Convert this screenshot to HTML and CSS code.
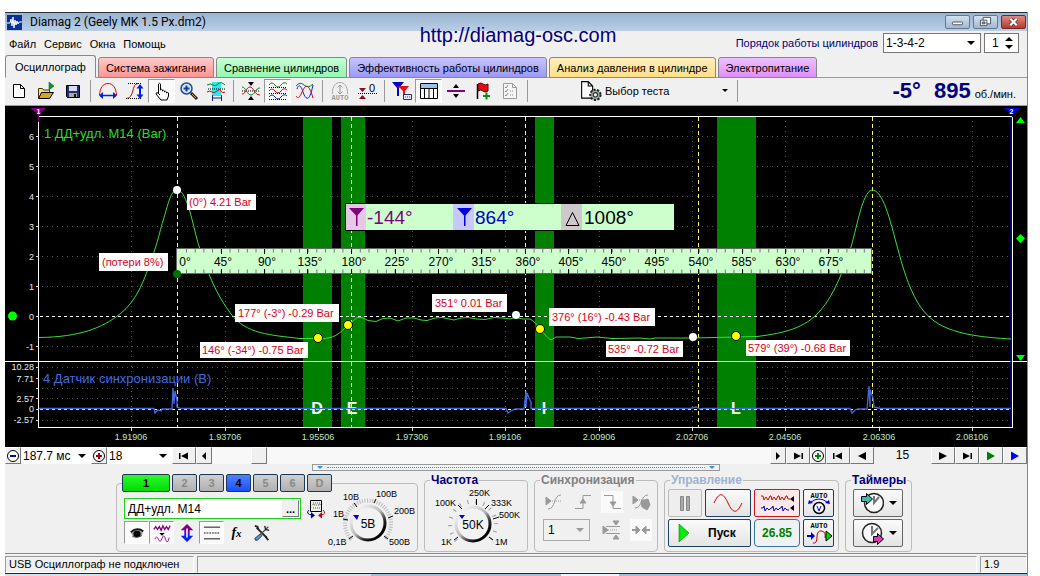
FILE: index.html
```html
<!DOCTYPE html>
<html lang="ru">
<head>
<meta charset="utf-8">
<title>Diamag 2 (Geely MK 1.5 Px.dm2)</title>
<link rel="stylesheet" href="styles.css">
</head>
<body>
<main class="window">
  <header class="titlebar">
    <svg class="app-icon" viewBox="0 0 15 15"><rect width="15" height="15" fill="#0a2f96"/><path d="M0 8h3l1-4 1 7 1-9 1 11 1-8 1 5 1-4 1 3 1-2h3" fill="none" stroke="#fff"/></svg>
    <h1 class="title">Diamag 2 (Geely MK 1.5 Px.dm2)</h1>
    <div class="win-buttons">
      <button class="win-btn" aria-label="Свернуть"><svg viewBox="0 0 24 13"><rect x="6.5" y="6.500" width="11" height="3" rx="1" fill="#fff" stroke="#444b58"/></svg></button>
      <button class="win-btn" aria-label="Восстановить"><svg viewBox="0 0 24 13"><path d="M9.500 1.500h8v7h-8z" fill="#fff" stroke="#444b58"/><path d="M6.500 4.500h7v6h-7z" fill="#fff" stroke="#444b58"/><path d="M8.500 6.500h3v2h-3z" fill="#8fa9c6" stroke="#444b58"/></svg></button>
      <button class="win-btn close" aria-label="Закрыть"><svg viewBox="0 0 24 13"><path d="M8.500 3l7 7M15.500 3l-7 7" stroke="#5c3030" stroke-width="4"/><path d="M8.500 3l7 7M15.500 3l-7 7" stroke="#fff" stroke-width="2.400"/></svg></button>
    </div>
  </header>
  <a class="site-link" href="#site">http://diamag-osc.com</a>

  <div class="menu-row">
    <nav class="menu">
      <button>Файл</button><button>Сервис</button><button>Окна</button><button>Помощь</button>
    </nav>
    <label class="order-label" for="order">Порядок работы цилиндров</label>
    <span class="select order"><select id="order"><option>1-3-4-2</option></select></span>
    <span class="spin"><input type="number" value="1" aria-label="Номер цилиндра"><svg viewBox="0 0 8 14"><path d="M4 1L8 5H0zM0 9h8l-4 4z"/></svg></span>
  </div>

  <nav class="tabs">
    <button class="tab active">Осциллограф</button>
    <button class="tab red">Система зажигания</button>
    <button class="tab green">Сравнение цилиндров</button>
    <button class="tab blue">Эффективность работы цилиндров</button>
    <button class="tab yellow">Анализ давления в цилиндре</button>
    <button class="tab violet">Электропитание</button>
  </nav>

  <div class="toolbar">
    <button class="tool" aria-label="Новый"><svg viewBox="0 0 20 20"><path d="M4.500 3.500h7l4 4v9h-11zM11.500 3.500v4h4" fill="#fff" stroke="#000"/></svg></button>
    <button class="tool" aria-label="Открыть"><svg viewBox="0 0 20 20"><path d="M2.500 17.500v-10h4l1 1.500h6v3" fill="#f5dd8c" stroke="#4a3a00"/><path d="M2.500 17.500l3-6h12l-4 6z" fill="#d9a520" stroke="#000"/><path d="M13 1l5 4-5 4z" fill="#00a020" stroke="#004d10" stroke-width=".5"/></svg></button>
    <button class="tool" aria-label="Сохранить"><svg viewBox="0 0 20 20"><path d="M3.500 4.500h13v12h-12l-1-1z" fill="#26306e" stroke="#000"/><path d="M6 5h8v5H6z" fill="#d8dcf0"/><path d="M6 12h8v4H6z" fill="#aaa"/><path d="M11 13h2v3h-2z" fill="#111"/></svg></button>
    <span class="sep"></span>
    <button class="tool" aria-label="Развертка"><svg viewBox="0 0 20 20"><path d="M1.500 14C2 7 5 2.500 10 2.500S18 7 18.500 14" fill="none" stroke="#e00000"/><path d="M3 14.500h14" stroke="#0022dd" stroke-width="1.500"/><path d="M1 14.500l4-3.500v7zM19 14.500l-4-3.500v7z" fill="#0022dd"/></svg></button>
    <button class="tool" aria-label="Амплитуда"><svg viewBox="0 0 20 20"><path d="M1 17.500c9 0 5-15 12-15" fill="none" stroke="#e00000"/><path d="M3 2.500h14M1 17.500h15" stroke="#000" stroke-dasharray="1 1"/><path d="M15 6v9" stroke="#0022dd" stroke-width="2"/><path d="M11.500 7.500L15 3l3.500 4.500zM11.500 13.500L15 18l3.500-4.500z" fill="#0022dd"/></svg></button>
    <button class="tool pressed" aria-label="Рука"><svg viewBox="0 0 20 20"><path d="M6.500 13V3q1-1.500 2 0v6q1-1.500 2 0v1q1-1.500 2 0v1q1-1.500 2 0v1q1-1 2 0v3l-1.500 4h-6l-5-6q0-2 2-1l2 2" fill="#fff" stroke="#000"/></svg></button>
    <button class="tool" aria-label="Увеличить"><svg viewBox="0 0 20 20"><path d="M12 12l6 6" stroke="#222" stroke-width="3"/><path d="M13 13l4 4" stroke="#d9a44b" stroke-width="1"/><circle cx="7.500" cy="7.500" r="5.500" fill="#d6ecff" stroke="#234a86" stroke-width="1.500"/><path d="M4.500 7.500h6M7.500 4.500v6" stroke="#1838a8" stroke-width="2"/></svg></button>
    <button class="tool" aria-label="Выделить участок"><svg viewBox="0 0 20 20"><path d="M6 1h9v14H6z" fill="#2ee6ee"/><path d="M1 4q4-2 6 0t5-1 7 1" fill="none" stroke="#087f2f"/><path d="M2 8h17" stroke="#000" stroke-dasharray="1 1"/><path d="M1 11q3-2 5 0t5-1 4 0 4 1" fill="none" stroke="#e00000"/><path d="M7 17h8M6.500 14v6M15.500 14v6" stroke="#102090"/></svg></button>
    <span class="sep"></span>
    <button class="tool" aria-label="Совместить"><svg viewBox="0 0 20 20"><path d="M1 10h18" stroke="#000" stroke-dasharray="1 1"/><path d="M1 13c4 0 4-7 8-7s4 8 10 8" fill="none" stroke="#e00000"/><path d="M1 6c4 0 5 8 9 8s4-7 9-7" fill="none" stroke="#087f2f"/><path d="M7 1h6l-3 4zM7 19h6l-3-4z"/></svg></button>
    <button class="tool pressed" aria-label="Разделить"><svg viewBox="0 0 20 20"><path d="M1 4q3-4 6 0t6 0 6-1" fill="none" stroke="#087f2f"/><path d="M1 6.500h18M1 12.500h18M1 18.500h18" stroke="#000" stroke-dasharray="1 1"/><path d="M1 10q3-4 6 0t6 0 6-1" fill="none" stroke="#e00000"/><path d="M1 16q3-4 6 0t6 0 6-1" fill="none" stroke="#0022dd"/></svg></button>
    <button class="tool" aria-label="Наложить"><svg viewBox="0 0 20 20"><path d="M1 5q4-5 8-1t9-1" fill="none" stroke="#087f2f"/><path d="M2 8C4 2 6 5 8 11s6 13 10-7" fill="none" stroke="#0022dd"/><path d="M1 15C4 19 5 15 8 9s6-6 10 8" fill="none" stroke="#e00000"/></svg></button>
    <span class="sep"></span>
    <button class="tool" aria-label="Авто"><svg viewBox="0 0 20 20"><path d="M2.500 13C2 5 6 1.500 10 1.500S18 5 17.500 13" fill="none" stroke="#a8a8a8"/><path d="M10 4v8M7.500 6.500L10 4l2.500 2.500M7.500 10.500L10 13l2.500-2.500" fill="none" stroke="#999"/><text x="10" y="19" class="ic-auto gray">AUTO</text></svg></button>
    <button class="tool" aria-label="Ноль"><svg viewBox="0 0 20 20"><path d="M1 12.500h19" stroke="#000" stroke-dasharray="1 1"/><path d="M2 7h7l-3.500 4zM2 18h7l-3.500-4z" fill="#8b0a1a"/><text x="15" y="11" class="ic-zero">0</text></svg></button>
    <span class="sep"></span>
    <button class="tool" aria-label="Маркеры"><svg viewBox="0 0 20 20"><path d="M0 1h12L7 7v8H5V7z" fill="#0000d8"/><path d="M6 5h11l-4 5v7h-2v-7z" fill="#e01010"/><path d="M11.500 13.500h8v5h-8z" fill="#eef" stroke="#24306c"/><path d="M13 16h5" stroke="#24306c" stroke-dasharray="1 1"/></svg></button>
    <button class="tool pressed" aria-label="Таблица"><svg viewBox="0 0 20 20"><path d="M1.500 2.500h17v15h-17z" fill="#fff" stroke="#000"/><path d="M2 3h16v4H2z" fill="#9dc0ea"/><path d="M1 7.500h18M5.500 7v10M10 7v10M14.500 7v10" stroke="#000"/></svg></button>
    <button class="tool" aria-label="Линия"><svg viewBox="0 0 20 20"><path d="M1 10h18" stroke="#800080" stroke-width="2"/><path d="M10 3l3 4H7zM10 17l3-4H7z"/></svg></button>
    <button class="tool" aria-label="Флажок"><svg viewBox="0 0 20 20"><path d="M4.500 3v15" stroke="#000" stroke-width="1.500"/><path d="M5 3q3-2 5 0t5 0v7q-3 2-5 0t-5 0z" fill="#e40c14" stroke="#600"/><path d="M10 15h7M13.500 11.500v7" stroke="#0a8a1c" stroke-width="2"/></svg></button>
    <button class="tool" aria-label="Отчет"><svg viewBox="0 0 20 20"><path d="M3.500 2.500h9l4 4v11h-13zM12.500 2.500v4h4" fill="#f6f6f6" stroke="#999"/><path d="M5 6l1 1 2-3M5 10l1 1 2-3M5 14l1 1 2-3" fill="none" stroke="#888"/><path d="M10 10h4M10 14h4" stroke="#888" stroke-dasharray="1 1"/></svg></button>
    <span class="sep"></span>
    <button class="test-pick">
      <svg class="test-ic" viewBox="0 0 20 20"><path d="M1.500 1.500h6l4 4v11h-10zM7.500 1.500v4h4" fill="#fff" stroke="#000"/><circle cx="14" cy="13.500" r="4.700" fill="#9aa89c" stroke="#222" stroke-width="1.800" stroke-dasharray="2 1.300"/><circle cx="14" cy="13.500" r="2" fill="#eee" stroke="#333"/></svg>
      <span>Выбор теста</span><i class="caret"></i>
    </button>
    <span class="sep"></span>
    <output class="rpm"><b>-5°</b><b>895</b><small>об./мин.</small></output>
  </div>

  <svg class="chart" viewBox="5 106 1022 341" role="img" aria-label="Осциллограмма">
    <rect x="5" y="106" width="1022" height="341" fill="#000"/>
    <g class="grid">
      <path d="M131.500 121V427M225.500 121V427M318.500 121V427M412.500 121V427M505.500 121V427M599.500 121V427M692.500 121V427M785.500 121V427M879.500 121V427M972.500 121V427"/>
      <path d="M42 136.500H1011M42 166.500H1011M42 196.500H1011M42 226.500H1011M42 256.500H1011M42 286.500H1011M42 346.500H1011M42 367.500H1011M42 378.500H1011M42 388.500H1011M42 398.500H1011M42 420.500H1011"/>
    </g>
    <path d="M303 117h29v310h-29zM341 117h24v310h-24zM535 117h19v310h-19zM717 117h39v310h-39z" fill="#008000"/>
    <path d="M40 316.500H1011M40 409.500H1011" stroke="#fff" stroke-dasharray="3 3"/>
    <path d="M177.500 117V427M351.500 117V427M525.500 117V427M698.500 117V427M872.500 117V427" stroke="#ffff50" stroke-dasharray="4 3"/>
    <path d="M38 116.500H1012M5 361.500H1027M38 427.500H1013" stroke="#fff"/>
    <path d="M38.500 117V428M1012.500 117V428" stroke="#fff"/>
    <path d="M1011.200 117V427" stroke="#0000b0" stroke-width="1.500"/>
    <path d="M36 136.500h3M36 166.500h3M36 196.500h3M36 226.500h3M36 256.500h3M36 286.500h3M36 316.500h3M36 346.500h3M36 367.500h3M36 378.500h3M36 388.500h3M36 398.500h3M36 409.500h3M36 420.500h3M131.500 428v3M225.500 428v3M318.500 428v3M412.500 428v3M505.500 428v3M599.500 428v3M692.500 428v3M785.500 428v3M879.500 428v3M972.500 428v3" stroke="#ddd"/>
    <path class="trace" d="M39 337.500C80 337 102 328 120 314S145 278 154 252C159 237 161 227 163 221C168 204 171 190 177 190S186 200 190 212C194 226 196 237 199 246C208 274 216 294 231 314S270 335 300 338.500L317 338.500C334 340 340 333 348 325L353 321L357 317.500L362 317.500L368 320.500L376 321.500L383 318.500L390 318L398 321L406 318L414 318L421 320L427 320.500L435 318L442 317.500L454 320L461 318L468 317.500L477 319L485 319.500L494 317.500L503 318L510 319L516 317L522 319L530 319C538 323 542 334 551 340L556 337L570 337L578 338.500L585 338L597 337L612 338.500L640 338L650 339L655 338L693 338L736 337L757 336.500C785 333 805 328 820 311S844 268 850 250C856 233 862 191 872 190C883 190 890 220 897 246C903 268 908 286 918 303C932 326 953 336 1011 339"/>
    <path class="sync" d="M39 408.500H154L155 413L158 410L161 411L162 409H172L173 388L174 404L175 391L177 400V407L181 408.500H506L508 413L511 411L515 409H524L526 391V407L527 393L529 398L531 402V408.500H690L696 407L700 409L702 408.500H850L852 413L855 410L858 409H867L869 386L870 407V390L873 398L874 407L880 408.500H1011"/>
    <g class="stage"><text x="317" y="414">D</text><text x="352" y="414">E</text><text x="544" y="414">I</text><text x="736" y="414">L</text></g>
    <path d="M311 408.500h12M346 408.500h12M538 408.500h12M731 408.500h12" stroke="#4169e1"/>

    <text x="44" y="138" class="ch-name lime">1 ДД+удл. М14 (Bar)</text>
    <text x="43" y="383" class="ch-name royal">4 Датчик синхронизации (В)</text>
    <g class="axis y">
      <text x="34" y="140">6</text><text x="34" y="170">5</text><text x="34" y="200">4</text><text x="34" y="230">3</text><text x="34" y="260">2</text><text x="34" y="290">1</text><text x="34" y="320">0</text><text x="34" y="350">-1</text>
      <text x="34" y="370">10.28</text><text x="34" y="382">7.71</text><text x="34" y="402">2.57</text><text x="34" y="412">0</text><text x="34" y="423">-2.57</text>
    </g>
    <g class="axis x">
      <text x="131" y="440">1.91906</text><text x="225" y="440">1.93706</text><text x="318" y="440">1.95506</text><text x="412" y="440">1.97306</text><text x="505" y="440">1.99106</text><text x="599" y="440">2.00906</text><text x="692" y="440">2.02706</text><text x="785" y="440">2.04506</text><text x="879" y="440">2.06306</text><text x="972" y="440">2.08106</text>
    </g>
    <path d="M30 108h16l-7 7zM38 113h1v9h-1z" fill="#800080"/><text x="38.500" y="114" class="flag">1</text>
    <path d="M1004 108h16l-8 7z" fill="#0000f0"/><text x="1011.500" y="114" class="flag">2</text>
    <path d="M1020.500 117l4.500 6h-9zM1020.500 234l4.500 4.500-4.500 4.500-4.500-4.500zM1016 355h9l-4.500 6z" fill="#00ff00"/>
    <circle cx="12.500" cy="316" r="4.500" fill="#00ff00"/>

    <rect x="176.500" y="248.500" width="695" height="25" fill="#ccffcc" stroke="#666"/>
    <path d="M186 250.500H871M186 271.500H871" stroke="#777" stroke-width="4" stroke-dasharray="1 7.690"/>
    <path d="M221.500 249v5M264.500 249v5M307.500 249v5M351.500 249v5M395.500 249v5M438.500 249v5M481.500 249v5M525.500 249v5M568.500 249v5M611.500 249v5M655.500 249v5M698.500 249v5M742.500 249v5M785.500 249v5M828.500 249v5M221.500 269v5M264.500 269v5M307.500 269v5M351.500 269v5M395.500 269v5M438.500 269v5M481.500 269v5M525.500 269v5M568.500 269v5M611.500 269v5M655.500 269v5M698.500 269v5M742.500 269v5M785.500 269v5M828.500 269v5" stroke="#000"/>
    <g class="ruler">
      <text x="185" y="266">0°</text><text x="223" y="266">45°</text><text x="267" y="266">90°</text><text x="310" y="266">135°</text><text x="354" y="266">180°</text><text x="397" y="266">225°</text><text x="441" y="266">270°</text><text x="484" y="266">315°</text><text x="528" y="266">360°</text><text x="571" y="266">405°</text><text x="614" y="266">450°</text><text x="657" y="266">495°</text><text x="701" y="266">540°</text><text x="744" y="266">585°</text><text x="788" y="266">630°</text><text x="831" y="266">675°</text>
    </g>

    <rect x="345.500" y="203.500" width="329" height="27" fill="#ccffcc" stroke="#000"/>
    <path d="M346 204h20v26h-20z" fill="#e6c8e6"/><path d="M453 204h21v26h-21z" fill="#c8c8ff"/><path d="M561 204h21v26h-21z" fill="#ccc8cc"/>
    <path d="M349 208h15l-6.500 7.500V226h-1.500V215.500z" fill="#800080"/>
    <path d="M457 208h15l-6.500 7.500V226h-1.500V215.500z" fill="#0000e0"/>
    <path d="M572.500 212.500l6.500 13h-13z" fill="none" stroke="#000"/>
    <g class="readout"><text x="367" y="224" fill="#800080">-144°</text><text x="475" y="224" fill="#0000c8">864°</text><text x="584" y="224" fill="#000">1008°</text></g>

    <path d="M187 194h69v16h-69zM99 253h69v18h-69zM235 304h104v18h-104zM200 342h108v16h-108zM432 294h75v18h-75zM549 308h106v18h-106zM606 341h77v16h-77zM746 340h104v16h-104z" fill="#fff"/>
    <g class="note">
      <text x="189" y="206">(0°) 4.21 Bar</text><text x="102" y="266">(потери 8%)</text><text x="238" y="317">177° (-3°) -0.29 Bar</text><text x="202" y="354">146° (-34°) -0.75 Bar</text><text x="435" y="307">351° 0.01 Bar</text><text x="552" y="321">376° (16°) -0.43 Bar</text><text x="608" y="353">535° -0.72 Bar</text><text x="748" y="352">579° (39°) -0.68 Bar</text>
    </g>
    <g fill="#fff"><circle cx="177" cy="190" r="4"/><circle cx="516" cy="315" r="4"/><circle cx="693" cy="337" r="4"/></g>
    <g fill="#ffff00" stroke="#000"><circle cx="318" cy="338" r="4.500"/><circle cx="348" cy="325" r="4.500"/><circle cx="540" cy="329" r="4.500"/><circle cx="736" cy="336" r="4.500"/></g>
    <circle cx="177" cy="274" r="4" fill="#007000"/>
  </svg>

  <div class="nav-row">
    <button class="nb sm" aria-label="Уменьшить"><svg viewBox="0 0 14 14"><circle cx="7" cy="7" r="5.500" fill="#fff" stroke="#000"/><path d="M4 7h6" stroke="#000080" stroke-width="2"/></svg></button>
    <span class="select span"><select aria-label="Время"><option>187.7 мс</option></select></span>
    <button class="nb sm" aria-label="Увеличить"><svg viewBox="0 0 14 14"><circle cx="7" cy="7" r="5.500" fill="#fff" stroke="#000"/><path d="M4 7h6M7 4v6" stroke="#a00000" stroke-width="2"/></svg></button>
    <span class="select zoom"><select aria-label="Масштаб"><option>18</option></select></span>
    <button class="nb" aria-label="В начало"><svg viewBox="0 0 14 14"><path d="M2 4h1.500v6H2zM11 3.500v7L4 7z"/></svg></button>
    <button class="nb sm" aria-label="Влево"><svg viewBox="0 0 14 14"><path d="M9 3v8L5 7z"/></svg></button>
    <div class="track"><button class="thumb" aria-label="Прокрутка"></button></div>
    <button class="nb sm" aria-label="Вправо"><svg viewBox="0 0 14 14"><path d="M5 3v8l4-4z"/></svg></button>
    <button class="nb" aria-label="В конец"><svg viewBox="0 0 14 14"><path d="M10.500 4H12v6h-1.500zM3 3.500v7L10 7z"/></svg></button>
    <button class="nb sm" aria-label="Добавить кадр"><svg viewBox="0 0 14 14"><circle cx="7" cy="7" r="5.500" fill="#fff" stroke="#000"/><path d="M4 7h6M7 4v6" stroke="#008000" stroke-width="2"/></svg></button>
    <button class="nb" aria-label="Первый кадр"><svg viewBox="0 0 14 14"><path d="M2 4h1.500v6H2zM11 3.500v7L4 7z"/></svg></button>
    <button class="nb" aria-label="Предыдущий кадр"><svg viewBox="0 0 14 14"><path d="M11 3v8L3 7z"/></svg></button>
    <output class="frame">15</output>
    <button class="nb" aria-label="Следующий кадр"><svg viewBox="0 0 14 14"><path d="M3 3v8l8-4z"/></svg></button>
    <button class="nb" aria-label="Последний кадр"><svg viewBox="0 0 14 14"><path d="M10.500 4H12v6h-1.500zM3 3.500v7L10 7z"/></svg></button>
    <button class="nb" aria-label="Воспроизвести"><svg viewBox="0 0 14 14"><path d="M3 2.500v9l8-4.500z" fill="#008000"/></svg></button>
    <button class="nb" aria-label="Вперед"><svg viewBox="0 0 14 14"><path d="M3 2.500v9l8-4.500z" fill="#0000ff"/></svg></button>
  </div>

  <div class="splitter"><i></i><span></span><i></i></div>

  <div class="panel">
    <fieldset class="group channels">
      <legend>
        <button class="chan on1">1</button><button class="chan">2</button><button class="chan">3</button><button class="chan on4">4</button><button class="chan">5</button><button class="chan">6</button><button class="chan">D</button>
      </legend>
      <div class="chan-body">
        <div class="chan-left">
          <div class="sensor-row">
            <span class="sensor"><input type="text" value="ДД+удл. М14" aria-label="Датчик"><button>...</button></span>
            <svg class="meter" viewBox="0 0 20 20"><path d="M4.500 1.500h11v11h-11z" fill="#eee" stroke="#000"/><path d="M7 4h7v2H7zM7 9h7" stroke="#555" stroke-dasharray="1 1" fill="none"/><path d="M3 11q-4 4 3 5" fill="none" stroke="#000090"/><path d="M5 13l4 3.500-4 3z" fill="#000090"/><path d="M17 11q4 4-2 5" fill="none" stroke="#d00000"/><path d="M16 13l-4 3.500 4 3z" fill="#d00000"/></svg>
          </div>
          <div class="chan-icons">
            <button class="tool pressed" aria-label="Видимость"><svg viewBox="0 0 20 20"><path d="M3 9q7-5 14-1l-2 6q-6 3-10-1z" fill="#999"/><path d="M3 9q7-6 14-1" fill="none" stroke="#111" stroke-width="2"/><ellipse cx="10" cy="11" rx="4" ry="3.500"/><path d="M5 14q5 2 10-1" fill="none" stroke="#333"/></svg></button>
            <button class="tool pressed" aria-label="Сглаживание"><svg viewBox="0 0 20 20"><path d="M1 6l2-3 2 3 2-3 2 4 2-5 2 4 2-3 2 3 2-4" fill="none" stroke="#800080" stroke-width="1.500"/><path d="M7 10h6l-3 3z"/><path d="M2 17q2-5 4 0t4-1 4 1 4-2" fill="none" stroke="#a000a0"/></svg></button>
            <button class="tool" aria-label="Инверсия"><svg viewBox="0 0 20 20"><path d="M10 0l7 7h-4v3H7V7H3z" fill="#800080"/><path d="M10 20l7-7h-4v-3H7v3H3z" fill="#0020ff"/><path d="M10 5v10" stroke="#ddf" stroke-width="2"/></svg></button>
            <button class="tool pressed" aria-label="Линии"><svg viewBox="0 0 20 20"><path d="M1 3.500h18M1 16.500h18" stroke="#000"/><path d="M1 10h18" stroke="#000" stroke-dasharray="2 1"/></svg></button>
            <button class="tool fx" aria-label="Функция">f<small>x</small></button>
            <button class="tool" aria-label="Настройки"><svg viewBox="0 0 20 20"><path d="M4 4l11 11" stroke="#222" stroke-width="2"/><path d="M2 2l3 1 1 3M14 14l3 4" fill="none" stroke="#222" stroke-width="2"/><path d="M17 3L8 12" stroke="#555" stroke-width="1.500"/><path d="M13 2l1 4 4 1" stroke="#222" stroke-width="1.500" fill="none"/><path d="M8 11l-6 5q0 3 3 2l5-5z" fill="#6090d0" stroke="#234"/></svg></button>
          </div>
        </div>
        <svg class="dial volts" viewBox="328 487 91 62">
          <defs><linearGradient id="rim" x1="0.150" y1="0.100" x2="0.850" y2="0.850"><stop offset="0" stop-color="#f4f4f4"/><stop offset=".5" stop-color="#bbb"/><stop offset=".8" stop-color="#222"/><stop offset="1" stop-color="#000"/></linearGradient></defs>
          <path d="M353.500 540.500A23 23 0 1 1 386.500 540.500" fill="none" stroke="#bbb" stroke-width="4" stroke-dasharray="1 1.500"/>
          <path d="M351 540l4-3M345 520l5 1M356 504l3 4M378 500l-2 4M395 517l-5 2M390 540l-4-3" stroke="#000"/>
          <circle cx="370" cy="524" r="17" fill="#f2f2f2" stroke="url(#rim)" stroke-width="3"/><path d="M355 516h6l-2 5z" fill="#0000e0"/>
          <text x="370" y="529" class="dial-v">5В</text>
          <g class="dial-t"><text x="330" y="546">0,1В</text><text x="335" y="518">1В</text><text x="345" y="501">10В</text><text x="378" y="498">100В</text><text x="396" y="515">200В</text><text x="391" y="546">500В</text></g>
        </svg>
      </div>
    </fieldset>

    <fieldset class="group freq">
      <legend>Частота</legend>
      <svg class="dial" viewBox="426 487 101 62">
        <path d="M457.500 540.500A23 23 0 1 1 490.500 540.500" fill="none" stroke="#999" stroke-width="4" stroke-dasharray="1 7"/>
        <path d="M455 540l4-3M459 505l4 4M477.500 499v6M490 505l-4 4M500 517l-6 2M494 540l-4-3" stroke="#000"/>
        <circle cx="474" cy="524" r="17" fill="#f2f2f2" stroke="url(#rim)" stroke-width="3"/><path d="M460 515h6l-3 4z" fill="#0000e0"/>
        <text x="474" y="529" class="dial-v">50K</text>
        <g class="dial-t"><text x="442" y="545">1K</text><text x="436" y="506">100K</text><text x="470" y="496">250K</text><text x="492" y="506">333K</text><text x="500" y="518">500K</text><text x="496" y="545">1M</text></g>
      </svg>
    </fieldset>

    <fieldset class="group sync-group" disabled>
      <legend>Синхронизация</legend>
      <div class="sync-grid">
        <button class="gi" aria-label="Уровень"><svg viewBox="0 0 20 20"><path d="M2 5l5 4-5 4z"/><path d="M2 9h15" stroke-dasharray="1 1"/><path class="line" d="M4 17c8 0 5-14 13-14"/></svg></button>
        <button class="gi" aria-label="Фронт"><svg viewBox="0 0 20 20"><path class="line" d="M2 16.500h8v-13h8"/><path d="M10 7l-3 4h6z"/></svg></button>
        <button class="gi lit" aria-label="Спад"><svg viewBox="0 0 20 20"><path class="line" d="M2 3.500h9v13h8"/><path d="M11 14l-3-4h6z"/></svg></button>
        <button class="gi" aria-label="Ручная"><svg viewBox="0 0 20 20"><path d="M2 4l5 4-5 4z"/><path d="M2 8h16" stroke-dasharray="1 1"/><path class="line" d="M4 16c8 0 5-13 13-13"/><path d="M10 9l7-2 2 6-3 5-5-3z"/></svg></button>
        <span class="select sync-sel"><select aria-label="Канал синхронизации"><option>1</option></select></span>
        <button class="gi" aria-label="Окно"><svg viewBox="0 0 20 20"><path d="M1 6l5 4-5 4zM11 1h6l-3 4zM11 19h6l-3-4z"/><path d="M4 6.500h14M4 13.500h14"/><path d="M4 10h12" stroke-dasharray="1 1"/></svg></button>
        <button class="gi lit" aria-label="Центр"><svg viewBox="0 0 20 20"><path d="M1 10h5M14 10h5" stroke-width="2"/><path d="M5 6l4 4-4 4zM15 6l-4 4 4 4z"/></svg></button>
      </div>
    </fieldset>

    <fieldset class="group control">
      <legend>Управление</legend>
      <div class="ctl-grid">
        <button class="cb off" aria-label="Пауза"><svg viewBox="0 0 30 24"><path d="M10.500 5.500h3v14h-3zM16.500 5.500h3v14h-3z" fill="#aaa" stroke="#888"/></svg></button>
        <button class="cb" aria-label="Синус"><svg viewBox="0 0 30 24"><path d="M1 12C6 1 10 1 15 12S24 23 29 12" fill="none" stroke="#d00000"/></svg></button>
        <button class="cb alert" aria-label="Запись"><svg class="wide" viewBox="0 0 36 24"><path d="M2 5h2l1 4 2-3 2 3 2-4h1l1 4 2-3 2 3 2-4h1l1 4 2-3 2 3 2-4h1l1 3h2" fill="none" stroke="#d00000"/><path d="M2 17h2l1-2 1 5 2-3 2 2 2-2h1l1-2 1 5 2-3 2 2 2-2h1l1-2 1 5 2-3 2 2h2" fill="none" stroke="#0000d0"/><path d="M35 5v6l-4-3zM35 14v6l-4-3z" fill="#002"/></svg></button>
        <button class="cb" aria-label="Авто вольт"><svg viewBox="0 0 30 24"><text x="15" y="7" class="ic-auto">AUTO</text><path d="M7 11q8-6 16 0" fill="none" stroke="#0000d0"/><path d="M4 13l1-4 4 3zM26 13l-1-4-4 3z" fill="#0000d0"/><circle cx="15" cy="17" r="5.500" fill="#f8f8f8" stroke="#000" stroke-width="1.500"/><path d="M13 15l2 5 2-5" fill="none" stroke="#0000d0"/></svg></button>
        <button class="cb start"><svg viewBox="0 0 12 20"><path d="M1 1v18l10-9z" fill="#00ee00" stroke="#008000" stroke-width=".6"/></svg><span>Пуск</span></button>
        <output class="cb value">26.85</output>
        <button class="cb" aria-label="Авто запуск"><svg viewBox="0 0 30 24"><text x="15" y="7" class="ic-auto">AUTO</text><path d="M3 15h5" stroke="#0000d0" stroke-width="2"/><path d="M7 11l4 4-4 4z" fill="#0000d0"/><path d="M9 22q4 1 4-6t5-6q4 1 3 7" fill="none" stroke="#c00000"/><path d="M22 10v10l6-5z" fill="#00e000" stroke="#000"/></svg></button>
      </div>
    </fieldset>

    <fieldset class="group timers">
      <legend>Таймеры</legend>
      <div class="timer-col">
        <button class="cb timer" aria-label="Таймер запуска"><svg viewBox="0 0 24 24"><circle cx="14" cy="12" r="9.500" fill="#fafafa" stroke="#222" stroke-width="1.500"/><path d="M14 5v7l5-6" fill="none" stroke="#777" stroke-width="2"/><path d="M1.500 5.500h5v-3l6 5.500-6 5.500v-3h-5z" fill="#40b8b0" stroke="#000"/></svg><i class="caret"></i></button>
        <button class="cb timer" aria-label="Таймер остановки"><svg viewBox="0 0 24 24"><circle cx="12" cy="12" r="9.500" fill="#fafafa" stroke="#222" stroke-width="1.500"/><path d="M12 5v8l6-6" fill="none" stroke="#777" stroke-width="2"/><path d="M13.500 15.500h4v-3l6 5.500-6 5.500v-3h-4z" fill="#d040b0" stroke="#000"/></svg><i class="caret"></i></button>
      </div>
    </fieldset>
  </div>

  <footer class="status"><span class="cell msg">USB Осциллограф не подключен</span><span class="cell mid"></span><span class="cell ver">1.9</span></footer>
  <div class="taskbar"><span class="lead"></span><span class="item"></span></div>
</main>
</body>
</html>
```
FILE: styles.css
```css
* { box-sizing: border-box; }
body { margin: 0; background: #fff; color: #000; font: 11px/14px "Liberation Sans", Arial, sans-serif; }
button, input, select, output { font: inherit; color: inherit; margin: 0; padding: 0; }
button { background: none; border: 0; }
select, input { appearance: none; border: 0; background: none; outline: 0; min-width: 0; }
.window { position: relative; margin: 12px 12px 0 5px; background: #f0f0f0; border-right: 1px solid #888; }

.titlebar { display: flex; align-items: center; height: 19px; padding: 0 1px 0 2px; border-top: 1px solid #2a3038; background: linear-gradient(#9ab3d0, #bacfe6); }
.app-icon { width: 15px; height: 15px; }
.title { margin: 0 auto 0 8px; font: 12px/16px Roboto, sans-serif; }
.win-buttons { display: flex; gap: 3px; }
.win-btn { width: 25px; height: 14px; border: 1px solid #66788f; border-radius: 2px; background: linear-gradient(#d3e0ee, #a2b9d2); }
.win-btn svg { display: block; width: 100%; height: 12px; }
.win-btn.close { background: linear-gradient(#dd8a80, #b83a2c); border-color: #6c2a28; }
.site-link { position: absolute; top: 12px; left: 50%; transform: translateX(-50%); margin-left: 2px; font-size: 20px; line-height: 23px; color: #000080; text-decoration: none; }

.menu-row { display: flex; align-items: center; height: 24px; padding-right: 8px; }
.menu { display: flex; gap: 8px; padding: 2px 0 0 4px; margin-right: auto; }
.order-label { color: #000080; margin-right: 5px; font-size: 11px; }
.select { position: relative; display: block; background: #fff; }
.select select { width: 100%; height: 100%; padding-left: 2px; font-size: 12px; }
.select::after, .caret { content: ""; border: 4px solid transparent; border-top-color: #000; border-bottom: 0; }
.select::after { position: absolute; right: 5px; top: 50%; margin-top: -2px; pointer-events: none; }
.order { width: 98px; height: 20px; border: 1px solid #777; margin-right: 3px; }
.spin { display: flex; align-items: center; width: 35px; height: 20px; padding-left: 7px; border: 1px solid #777; background: #fff; font-size: 12px; }
.spin input { width: 13px; appearance: textfield; }
.spin input::-webkit-inner-spin-button { appearance: none; display: none; margin: 0; }
.spin svg { width: 8px; height: 14px; }

.tabs { display: flex; align-items: flex-end; gap: 2px; height: 23px; box-shadow: inset 0 -1px #999; }
.tab { height: 21px; padding: 0 7px; border: 1px solid #888; border-radius: 3px 3px 0 0; white-space: nowrap; }
.tab.active { height: 23px; border-bottom-color: #f0f0f0; background: #f0f0f0; padding: 0 9px; }
.tab.red { background: linear-gradient(#ffc8c8, #ff9494); }
.tab.green { background: linear-gradient(#c4ffd4, #94f8b0); }
.tab.blue { background: linear-gradient(#c4c4ff, #9c98f8); }
.tab.yellow { background: linear-gradient(#ffeebc, #ffdf88); }
.tab.violet { background: linear-gradient(#eec0ff, #dc90fa); }

.toolbar { display: flex; align-items: center; height: 28px; padding-bottom: 2px; border-bottom: 1px solid #999; }
.tool { display: flex; align-items: center; justify-content: center; width: 27px; height: 24px; }
.tool svg { flex: none; width: 20px; height: 20px; }
.tool.pressed { background: #fafafa; border: 1px solid; border-color: #999 #fff #fff #999; }
.sep { width: 1px; height: 22px; margin: 0 3px 0 4px; background: #999; }
.ic-auto { font: bold 7px "Liberation Mono", monospace; text-anchor: middle; }
.gray { fill: #999; }
.ic-zero { font: 11px "Liberation Sans", sans-serif; text-anchor: middle; }
.test-pick { display: flex; align-items: center; gap: 3px; width: 202px; padding: 0 5px 0 49px; }
.test-ic { width: 22px; height: 22px; }
.test-pick .caret { margin-left: auto; border-width: 3px 3px 0; }
.rpm { display: flex; align-items: baseline; gap: 13px; margin-left: auto; padding-right: 11px; color: #000080; }
.rpm b { font-size: 22px; line-height: 24px; }
.rpm small { margin-left: -9px; font-size: 11px; color: #000; }

.chart { display: block; width: 100%; height: auto; font-family: "Liberation Sans", Arial, sans-serif; }
.grid { stroke: #555; stroke-dasharray: 1 4; }
.trace { fill: none; stroke: #3cdc3c; }
.sync { fill: none; stroke: #4169e1; stroke-width: 1.3; }
.stage { fill: #fff; font: bold 16px "Liberation Sans", sans-serif; text-anchor: middle; }
.ch-name { font-size: 13px; }
.lime { fill: #28dc28; }
.royal { fill: #4169e1; }
.axis.y { fill: #e8e8e8; font-size: 9px; text-anchor: end; }
.axis.x { fill: #c0e8c0; font-size: 9px; text-anchor: middle; }
.flag { fill: #fff; font-size: 7px; font-weight: bold; text-anchor: middle; }
.ruler { font-size: 12px; text-anchor: middle; }
.readout { font-size: 19px; }
.note { fill: #d80018; font-size: 11px; }

.nav-row { display: flex; align-items: stretch; height: 17px; }
.nb { display: flex; align-items: center; justify-content: center; width: 24px; border: 1px solid; border-color: #fff #777 #777 #fff; background: #f0f0f0; }
.nb.sm { width: 16px; }
.nb svg { width: 14px; height: 14px; flex: none; }
.span { width: 70px; }
.zoom { width: 65px; }
.track { flex: 1; padding-left: 39px; background: #f8f8f8; }
.thumb { display: block; width: 16px; height: 17px; border: 1px solid; border-color: #fff #777 #777 #fff; background: #f0f0f0; }
.frame { width: 57px; font-size: 12px; line-height: 17px; text-align: center; }

.splitter { display: flex; align-items: center; justify-content: space-between; gap: 4px; width: 40%; height: 7px; margin: 0 auto 0 30%; padding: 0 4px; border: 1px solid #999; background: #f0f4f8; }
.splitter span { flex: 1; border-top: 1px dotted #3c8cdc; }
.splitter i { border: 3px solid transparent; border-top-color: #3c8cdc; border-bottom: 0; }

.panel { display: flex; gap: 6px; padding: 3px 0 1px 111px; border-bottom: 1px solid #888; }
.group { min-width: 0; height: 78px; margin: 0; padding: 0; border: 1px solid #bbb; border-radius: 4px; }
.group legend { margin-left: 5px; padding: 0 1px; font-weight: bold; font-size: 12px; line-height: 12px; color: #000080; }
.channels { width: 302px; }
.group.channels legend { display: flex; gap: 2px; margin-left: 5px; padding: 0; }
.chan { width: 25px; height: 18px; border: 1px solid #183858; border-radius: 2px; background: linear-gradient(#d0d0d0, #b0b0b0); color: #888; font-size: 11px; line-height: 16px; }
.chan.on1 { width: 48px; background: linear-gradient(#30f830, #00dc00); color: #000; font-weight: bold; }
.chan.on4 { background: linear-gradient(#5080ff, #1c50f8); color: #000; font-weight: bold; }
.chan-body { display: flex; justify-content: space-between; }
.chan-left { padding: 6px 0 0 7px; }
.sensor-row { display: flex; align-items: center; gap: 5px; }
.sensor { display: flex; width: 177px; height: 21px; padding: 1px; border: 1px solid #20d020; background: #fff; }
.sensor input { flex: 1; padding-left: 2px; font-size: 12px; }
.sensor button { width: 17px; border: 1px solid; border-color: #eee #777 #777 #eee; background: #f0f0f0; font-weight: bold; line-height: 10px; }
.meter { width: 20px; height: 20px; }
.chan-icons { display: flex; padding-top: 2px; }
.chan-icons .tool { width: 25px; height: 23px; }
.chan-icons .tool svg { width: 18px; height: 18px; }
.chan-icons .fx { font: italic bold 14px "Liberation Serif", serif; }
.fx small { font-size: 11px; }
.dial { display: block; width: 101px; height: 62px; margin-top: 1px; }
.dial.volts { width: 91px; margin-top: -6px; }
.dial-v { font-size: 12px; text-anchor: middle; }
.dial-t { font-size: 9px; }
.freq { width: 104px; }
.sync-group { width: 124px; }
.group.sync-group legend { color: #808080; }
.sync-grid { display: grid; grid-template-columns: repeat(4, 22px); gap: 6px 7px; padding: 5px 4px 0 8px; align-items: center; }
.gi { height: 22px; padding: 1px; }
.gi svg { display: block; width: 20px; height: 20px; fill: #999; stroke: #999; }
.gi .line { fill: none; }
.gi.lit { background: #fafafa; }
.sync-sel { grid-column: span 2; width: 47px; height: 22px; border: 1px solid #aaa; background: #f0f0f0; }
.sync-sel select { padding-left: 4px; color: #000; opacity: 1; }
.sync-sel::after { border-top-color: #999; }
.control { width: 175px; }
.group.control legend { color: #9cb4d0; }
.ctl-grid { display: grid; grid-template-columns: 34px 46px 46px 31px; grid-auto-rows: 28px; gap: 2px 3px; padding: 3px 0 0 3px; }
.cb { display: flex; align-items: center; justify-content: center; border: 1px solid #1c4068; border-radius: 2px; background: linear-gradient(#fafafa, #e4e4e4); }
.cb svg { flex: none; width: 30px; height: 24px; }
.cb .wide { width: 36px; }
.cb.off { border-color: #bbb; background: #eee; }
.cb.alert { border-color: #d01818; background: #fce8e8; }
.cb.start { grid-column: span 2; justify-content: flex-start; gap: 18px; padding-left: 9px; font-weight: bold; font-size: 12px; }
.cb.start svg { width: 12px; height: 20px; }
.cb.value { border-color: #3870a8; border-radius: 4px; background: #eef2f4; color: #008000; font-weight: bold; font-size: 12px; }
.timers { width: 67px; }
.timer-col { display: grid; grid-auto-rows: 28px; gap: 2px; padding: 3px 8px 0 7px; }
.cb.timer { gap: 5px; border-color: #666; }
.cb.timer svg { width: 24px; height: 24px; }

.status { display: flex; gap: 3px; height: 19px; padding-top: 2px; }
.cell { border: 1px solid; border-color: #999 #fff #fff #999; padding-left: 3px; line-height: 15px; }
.msg { width: 189px; }
.mid { flex: 1; }
.ver { width: 47px; }
.taskbar { display: flex; height: 4px; border-top: 1px solid #223; background: #a4c0dc; }
.lead { width: 366px; background: #d4e0ec; }
.item { width: 58px; margin-left: 190px; background: #eef4fa; }
```
